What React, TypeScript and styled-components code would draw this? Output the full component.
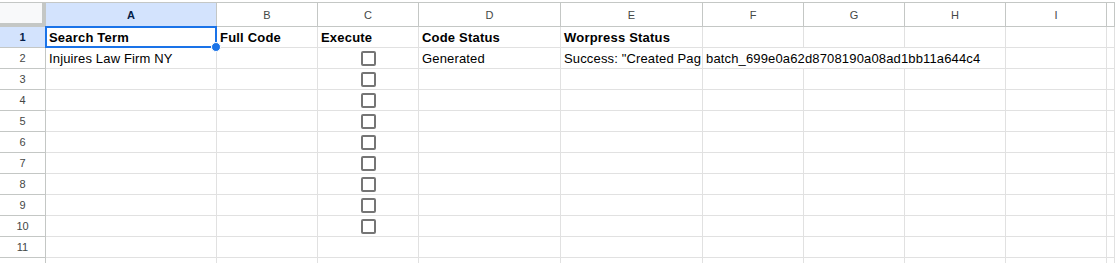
import React from 'react';
import styled, { createGlobalStyle, css } from 'styled-components';

const GlobalStyle = createGlobalStyle`
  html, body {
    margin: 0;
    padding: 0;
    background: #ffffff;
  }
  body {
    font-family: Arial, "Liberation Sans", sans-serif;
    overflow: hidden;
  }
`;

const COLS = [171, 101, 101, 142, 142, 101, 101, 101, 101];
const LETTERS = ['A', 'B', 'C', 'D', 'E', 'F', 'G', 'H', 'I'];
const ROW_COUNT = 11;

const Sheet = styled.div`
  padding-top: 2px;
  width: 1115px;
  height: 263px;
  box-sizing: border-box;
  overflow: hidden;
`;

const Grid = styled.div`
  display: grid;
  grid-template-columns: 46px ${COLS.map(w => `${w}px`).join(' ')} 1fr;
  grid-template-rows: 24px;
  grid-auto-rows: 21px;
  border-top: 1px solid #c4c7c5;
`;

const Corner = styled.div`
  background: #f8f9fa;
  box-sizing: border-box;
  border-right: 4px solid #c4c7c5;
  border-bottom: 4px solid #c4c7c5;
`;

const ColHeader = styled.div<{ $active?: boolean }>`
  box-sizing: border-box;
  display: flex;
  align-items: center;
  justify-content: center;
  font-size: 11px;
  font-family: "Liberation Sans", Arial, sans-serif;
  color: ${p => (p.$active ? '#041e49' : '#444746')};
  font-weight: ${p => (p.$active ? 700 : 400)};
  background: ${p => (p.$active ? '#d3e3fd' : '#ffffff')};
  border-right: 1px solid #c4c7c5;
  border-bottom: 1px solid #c4c7c5;
  padding-top: 1px;
`;

const RowHeader = styled.div<{ $active?: boolean }>`
  box-sizing: border-box;
  display: flex;
  align-items: center;
  justify-content: center;
  font-size: 11px;
  font-family: "Liberation Sans", Arial, sans-serif;
  color: ${p => (p.$active ? '#041e49' : '#444746')};
  font-weight: ${p => (p.$active ? 700 : 400)};
  background: ${p => (p.$active ? '#d3e3fd' : '#ffffff')};
  border-right: 1px solid #c4c7c5;
  border-bottom: 1px solid #c4c7c5;
`;

const Cell = styled.div<{ $bold?: boolean; $span?: number; $center?: boolean }>`
  position: relative;
  box-sizing: border-box;
  display: flex;
  align-items: center;
  padding: 0 3px;
  font-size: 13px;
  font-family: "Liberation Sans", Arial, sans-serif;
  color: #000000;
  font-weight: ${p => (p.$bold ? 700 : 400)};
  letter-spacing: ${p => (p.$bold ? '0.2px' : '0.15px')};
  white-space: nowrap;
  overflow: hidden;
  border-right: 1px solid #e1e1e1;
  border-bottom: 1px solid #e1e1e1;
  ${p => p.$span && css`grid-column: span ${p.$span};`}
  ${p => p.$center && css`justify-content: center;`}
`;

const Selection = styled.div`
  position: absolute;
  left: -1px;
  top: -1px;
  right: -1px;
  bottom: -1px;
  border: 2px solid #1a73e8;
  pointer-events: none;
`;

const SelectedCell = styled(Cell)`
  overflow: visible;
  z-index: 2;
`;

const Handle = styled.div`
  position: absolute;
  right: -5px;
  bottom: -5px;
  width: 8px;
  height: 8px;
  border-radius: 50%;
  background: #1a73e8;
  border: 1px solid #ffffff;
`;

const Checkbox = styled.div`
  width: 15px;
  height: 15px;
  box-sizing: border-box;
  border: 2px solid #757575;
  border-radius: 2px;
  margin-top: 1px;
`;

type Row = Record<string, { text?: string; bold?: boolean; span?: number; check?: boolean }>;

const rows: Row[] = [
  {
    A: { text: 'Search Term', bold: true },
    B: { text: 'Full Code', bold: true },
    C: { text: 'Execute', bold: true },
    D: { text: 'Code Status', bold: true },
    E: { text: 'Worpress Status', bold: true },
  },
  {
    A: { text: 'Injuires Law Firm NY' },
    C: { check: true },
    D: { text: 'Generated' },
    E: { text: 'Success: "Created Pag' },
    F: { text: 'batch_699e0a62d8708190a08ad1bb11a644c4', span: 3 },
  },
];

for (let i = 3; i <= 10; i++) rows.push({ C: { check: true } });
while (rows.length < ROW_COUNT) rows.push({});

export default function App() {
  return (
    <Sheet>
      <GlobalStyle />
      <Grid>
        <Corner />
        {LETTERS.map(l => (
          <ColHeader key={l} $active={l === 'A'}>{l}</ColHeader>
        ))}
        <ColHeader />
        {rows.map((row, r) => {
          const cells: React.ReactNode[] = [];
          let skip = 0;
          LETTERS.forEach(l => {
            if (skip > 0) {
              skip--;
              return;
            }
            const c = row[l];
            if (c?.span) skip = c.span - 1;
            if (r === 0 && l === 'A') {
              cells.push(
                <SelectedCell key={l} $bold={c?.bold}>
                  {c?.text}
                  <Selection />
                  <Handle />
                </SelectedCell>
              );
              return;
            }
            cells.push(
              <Cell key={l} $bold={c?.bold} $span={c?.span} $center={c?.check}>
                {c?.check ? <Checkbox /> : c?.text}
              </Cell>
            );
          });
          return (
            <React.Fragment key={r}>
              <RowHeader $active={r === 0}>{r + 1}</RowHeader>
              {cells}
              <Cell />
            </React.Fragment>
          );
        })}
        {/* partial next row under the fold */}
        <RowHeader />
        {LETTERS.map(l => (
          <Cell key={`x${l}`} />
        ))}
        <Cell />
      </Grid>
    </Sheet>
  );
}
